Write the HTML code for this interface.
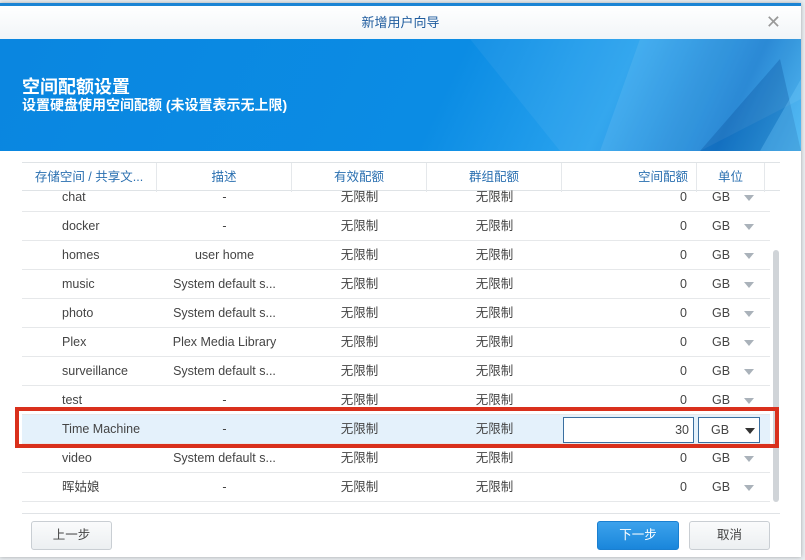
<!DOCTYPE html>
<html><head><meta charset="utf-8"><style>
*{margin:0;padding:0;box-sizing:border-box}
body{width:805px;height:560px;background:#e8ecef;font-family:"Liberation Sans","Noto Sans CJK SC",sans-serif;position:relative;overflow:hidden;font-size:12.5px;color:#444}
.dlg{position:absolute;left:0;top:3px;width:801px;height:554px;background:#fff;border-top:3px solid #1b84d4;box-shadow:0 0 4px rgba(0,0,0,.3)}
.title{height:33px;text-align:center;line-height:33px;color:#1f5c9e;font-size:13px;background:linear-gradient(#fff,#f1f5f8)}
.x{position:absolute;right:20px;top:6px;color:#999;font-size:18px}
.ban{position:absolute;left:0;top:33px;width:801px;height:112px;background:linear-gradient(115deg,#0a86e0 0%,#0b8ce4 55%,#2aa3ee 75%,#0e7ad0 90%,#3ab0f0 100%);overflow:hidden;color:#fff}
.ban h1{position:absolute;left:22px;top:34px;font-size:18px;font-weight:bold}
.ban p{position:absolute;left:22px;top:56px;font-size:14px;font-weight:bold}
.hd{position:absolute;top:156px;left:22px;width:758px;height:29px;border-top:1px solid #dfe3e6;border-bottom:1px solid #dfe3e6}
.c{position:absolute;top:0;height:29px;line-height:29px;text-align:center;white-space:nowrap}
.hd .c{color:#2a6fb0;border-right:1px solid #e5e8eb}
.row{position:absolute;left:22px;width:748px;height:29px;border-bottom:1px solid #e6e8ea}
.arr{display:inline-block;width:0;height:0;border-left:5px solid transparent;border-right:5px solid transparent;border-top:6px solid #aab2ba;margin-left:14px;vertical-align:middle}
.sb{position:absolute;left:773px;top:250px;width:6px;height:252px;background:#d0d4d8;border-radius:3px}
.btn{position:absolute;top:521px;height:29px;line-height:27px;text-align:center;border:1px solid #c9ced3;border-radius:3px;background:linear-gradient(#fafbfc,#eceff1);font-size:12.5px;color:#444}
</style></head><body>
<div class="dlg">
<div class="title">新增用户向导</div><div class="x">✕</div>
<div class="ban">
<svg width="801" height="112" style="position:absolute;left:0;top:0">
<polygon points="470,0 801,0 801,112 560,112" fill="#fff" opacity=".05"/>
<polygon points="640,0 801,0 801,60 700,112 600,112" fill="#fff" opacity=".08"/>
<polygon points="700,112 780,20 801,112" fill="#003f8a" opacity=".25"/>
<polygon points="760,112 801,40 801,112" fill="#7cd0ff" opacity=".3"/>
</svg>
<h1>空间配额设置</h1><p>设置硬盘使用空间配额 (未设置表示无上限)</p></div>
<div class="hd">
<div class="c" style="left:0;width:135px">存储空间 / 共享文...</div>
<div class="c" style="left:135px;width:135px">描述</div>
<div class="c" style="left:270px;width:135px">有效配额</div>
<div class="c" style="left:405px;width:135px">群组配额</div>
<div class="c" style="left:540px;width:135px;text-align:right;padding-right:8px">空间配额</div>
<div class="c" style="left:675px;width:68px">单位</div>
</div>
</div>
<div id="rows"></div>
<div class="sb"></div>
<div style="position:absolute;left:15px;top:407px;width:764px;height:41px;border:4px solid #d9301c"></div>
<div style="position:absolute;left:22px;top:513px;width:758px;border-top:1px solid #e0e3e6"></div>
<div class="btn" style="left:31px;width:81px">上一步</div>
<div class="btn" style="left:597px;width:82px;background:linear-gradient(#3ca2ec,#1a86db);border-color:#1a7fd0;color:#fff">下一步</div>
<div class="btn" style="left:689px;width:81px">取消</div>
<script>
var d=[["chat","-"],["docker","-"],["homes","user home"],["music","System default s..."],["photo","System default s..."],["Plex","Plex Media Library"],["surveillance","System default s..."],["test","-"],["Time Machine","-"],["video","System default s..."],["晖姑娘","-"]];
var h="";d.forEach(function(r,i){var t=183+i*29,tm=i==8;
h+='<div class="row" style="top:'+t+'px;'+(tm?'background:#e4f1fb;':'')+'">'+
'<div class="c" style="left:40px;text-align:left">'+r[0]+'</div>'+
'<div class="c" style="left:135px;width:135px">'+r[1]+'</div>'+
'<div class="c" style="left:270px;width:135px">无限制</div>'+
'<div class="c" style="left:405px;width:135px">无限制</div>'+
(tm?'<div class="c" style="left:541px;top:2px;height:26px;line-height:25px;width:131px;background:#fff;border:1px solid #3a6fa0;text-align:right;padding-right:4px">30</div><div class="c" style="left:676px;top:2px;height:26px;line-height:25px;width:62px;background:#fff;border:1px solid #3a6fa0;text-align:left;padding-left:12px">GB<span class="arr" style="border-top-color:#333;margin-left:16px"></span></div>'
:'<div class="c" style="left:540px;width:135px;text-align:right;padding-right:10px">0</div><div class="c" style="left:690px;text-align:left">GB<span class="arr"></span></div>')+'</div>';});
document.getElementById("rows").innerHTML=h;
</script>
</body></html>
